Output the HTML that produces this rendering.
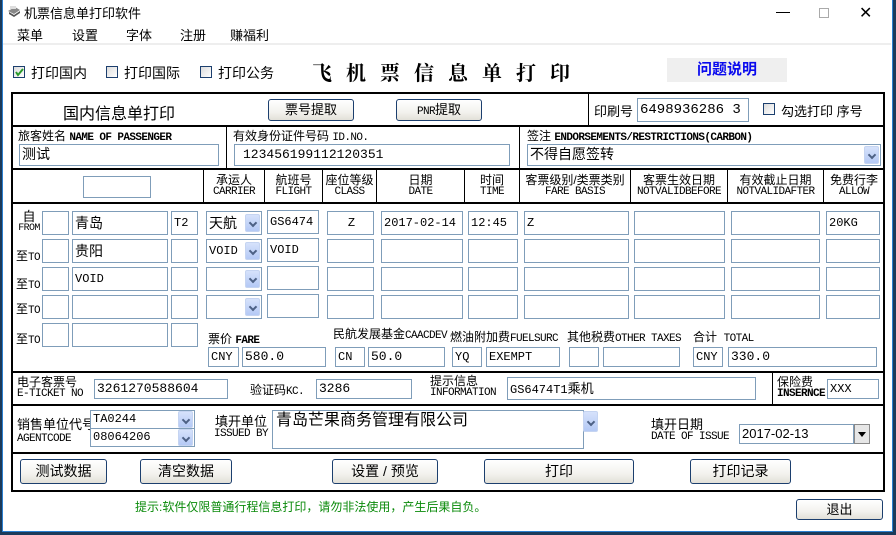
<!DOCTYPE html>
<html><head><meta charset="utf-8">
<style>
*{margin:0;padding:0;box-sizing:border-box}
body{width:896px;height:535px;overflow:hidden;background:#1b3a5a;font-family:"Liberation Sans","Noto Sans CJK SC",sans-serif;font-size:13px;color:#000;position:relative}
#win{position:absolute;left:2px;top:0;width:891px;height:532px;background:#fff;border:1px solid #2b7fd0;border-top:none}
.a{position:absolute;white-space:nowrap}
.in{position:absolute;border:1px solid #7f9db9;background:#fff;font-family:"Liberation Mono","Noto Sans CJK SC",monospace;font-size:12px;line-height:19px;padding-left:2px;white-space:nowrap;overflow:hidden}
.cj{font-family:"Liberation Sans","Noto Sans CJK SC",sans-serif;font-size:14px}
.arr{position:absolute;width:15px;background:linear-gradient(#d6e2fb,#b4c9f5);border:1px solid #c5d4f1;border-radius:2px}
.arr:after{content:"";position:absolute;left:4px;top:50%;margin-top:-3px;width:4px;height:4px;border-right:2px solid #4d6185;border-bottom:2px solid #4d6185;transform:rotate(45deg)}
.hl{position:absolute;height:2px;background:#000}
.vl{position:absolute;width:1px;background:#000}
.btn{position:absolute;border:1px solid #1c3f6e;border-radius:3px;background:linear-gradient(#fff,#f3f2ee 60%,#e2e0d8);text-align:center;font-size:14px}
.en{font-family:"Liberation Mono",monospace;font-size:11px;letter-spacing:-0.6px}
.b{font-weight:bold}
.lbl{position:absolute;text-align:center;line-height:12px;font-size:12px;white-space:nowrap}
.lbl .en{display:block}
.cb{position:absolute;width:12px;height:12px;border:1px solid #1c3f6e;background:linear-gradient(135deg,#dcdcdc,#fff)}
</style></head><body>
<div id="win"></div>
<!-- title bar -->
<div class="a" style="left:6px;top:4px;width:16px;height:14px">
<svg width="16" height="14"><path d="M2 7 L9 3 L14 6 L8 10 Z" fill="#888"/><path d="M3 8 L8 11 L14 7 L14 9 L8 13 L3 10Z" fill="#555"/><rect x="4" y="2" width="6" height="3" fill="#ddd"/></svg></div>
<div class="a" style="left:24px;top:3px;font-size:13px">机票信息单打印软件</div>
<div class="a" style="left:776px;top:12px;width:14px;height:1px;background:#000"></div>
<div class="a" style="left:819px;top:8px;width:10px;height:10px;border:1px solid #aaa"></div>
<div class="a" style="left:859px;top:3px;font-size:16px">✕</div>
<!-- menu -->
<div class="a" style="left:17px;top:25px">菜单</div>
<div class="a" style="left:72px;top:25px">设置</div>
<div class="a" style="left:126px;top:25px">字体</div>
<div class="a" style="left:180px;top:25px">注册</div>
<div class="a" style="left:230px;top:25px">赚福利</div>
<div class="a" style="left:3px;top:43px;width:888px;height:2px;background:#eee"></div>
<!-- checkboxes -->
<div class="cb" style="left:13px;top:66px"><svg width="10" height="10" style="position:absolute;left:0;top:0"><path d="M2 5 L4 8 L9 2" stroke="#2a9a2a" stroke-width="2" fill="none"/></svg></div>
<div class="a" style="left:31px;top:63px;font-size:14px">打印国内</div>
<div class="cb" style="left:106px;top:66px"></div>
<div class="a" style="left:124px;top:63px;font-size:14px">打印国际</div>
<div class="cb" style="left:200px;top:66px"></div>
<div class="a" style="left:218px;top:63px;font-size:14px">打印公务</div>
<div class="a" style="left:312px;top:57px;font-size:20px;font-weight:bold;letter-spacing:14px;font-family:'Noto Serif CJK SC',serif">飞机票信息单打印</div>
<div class="a" style="left:667px;top:58px;width:120px;height:24px;background:#efefef;color:#0a0aee;font-weight:bold;font-size:15px;text-align:center;line-height:24px">问题说明</div>
<!-- main frame -->
<div class="a" style="left:11px;top:92px;width:874px;height:400px;border:2px solid #000"></div>
<div class="hl" style="left:11px;top:125px;width:874px"></div>
<div class="hl" style="left:11px;top:168px;width:874px"></div>
<div class="hl" style="left:11px;top:202px;width:874px"></div>
<div class="hl" style="left:11px;top:371px;width:874px"></div>
<div class="hl" style="left:11px;top:404px;width:874px"></div>
<div class="hl" style="left:11px;top:452px;width:874px"></div>
<div class="vl" style="left:588px;top:93px;height:33px"></div>
<div class="vl" style="left:226px;top:126px;height:43px"></div>
<div class="vl" style="left:519px;top:126px;height:43px"></div>
<div class="vl" style="left:203px;top:169px;height:34px"></div>
<div class="vl" style="left:264px;top:169px;height:34px"></div>
<div class="vl" style="left:322px;top:169px;height:34px"></div>
<div class="vl" style="left:376px;top:169px;height:34px"></div>
<div class="vl" style="left:464px;top:169px;height:34px"></div>
<div class="vl" style="left:519px;top:169px;height:34px"></div>
<div class="vl" style="left:630px;top:169px;height:34px"></div>
<div class="vl" style="left:727px;top:169px;height:34px"></div>
<div class="vl" style="left:823px;top:169px;height:34px"></div>
<div class="vl" style="left:772px;top:372px;height:33px"></div>
<!-- row 1 -->
<div class="a" style="left:63px;top:100px;font-size:16px">国内信息单打印</div>
<div class="btn" style="left:268px;top:99px;width:86px;height:22px;line-height:20px;font-size:13px">票号提取</div>
<div class="btn" style="left:396px;top:99px;width:86px;height:22px;line-height:20px;font-size:13px"><span class="en">PNR</span>提取</div>
<div class="a" style="left:594px;top:101px">印刷号</div>
<div class="in" style="left:637px;top:98px;width:112px;height:24px;font-size:14px;line-height:22px">6498936286 3</div>
<div class="cb" style="left:763px;top:103px"></div>
<div class="a" style="left:781px;top:101px">勾选打印 序号</div>
<!-- row 2 -->
<div class="a" style="left:18px;top:127px;font-size:12px">旅客姓名 <span class="en b">NAME OF PASSENGER</span></div>
<div class="in cj" style="left:19px;top:144px;width:200px;height:22px">测试</div>
<div class="a" style="left:233px;top:127px;font-size:12px">有效身份证件号码 <span class="en">ID.NO.</span></div>
<div class="in" style="left:234px;top:144px;width:276px;height:22px;font-size:13px;padding-left:8px">123456199112120351</div>
<div class="a" style="left:527px;top:127px;font-size:12px">签注 <span class="en b">ENDORSEMENTS/RESTRICTIONS(CARBON)</span></div>
<div class="in cj" style="left:527px;top:144px;width:354px;height:22px">不得自愿签转</div>
<div class="arr" style="left:864px;top:146px;height:18px"></div>
<!-- header -->
<div class="in" style="left:83px;top:176px;width:68px;height:22px"></div>
<div class="lbl" style="left:204px;top:174px;width:60px">承运人<span class="en">CARRIER</span></div>
<div class="lbl" style="left:265px;top:174px;width:57px">航班号<span class="en">FLIGHT</span></div>
<div class="lbl" style="left:323px;top:174px;width:53px">座位等级<span class="en">CLASS</span></div>
<div class="lbl" style="left:377px;top:174px;width:87px">日期<span class="en">DATE</span></div>
<div class="lbl" style="left:465px;top:174px;width:54px">时间<span class="en">TIME</span></div>
<div class="lbl" style="left:520px;top:174px;width:110px">客票级别/类票类别<span class="en">FARE BASIS</span></div>
<div class="lbl" style="left:631px;top:174px;width:96px">客票生效日期<span class="en">NOTVALIDBEFORE</span></div>
<div class="lbl" style="left:728px;top:174px;width:95px">有效截止日期<span class="en">NOTVALIDAFTER</span></div>
<div class="lbl" style="left:824px;top:174px;width:60px">免费行李<span class="en">ALLOW</span></div>
<!-- segment rows -->
<div class="lbl" style="left:15px;top:211px;width:28px;font-size:13px">自<span class="en" style="font-size:10px">FROM</span></div>
<div class="a" style="left:16px;top:247px;font-size:12px">至<span class="en">TO</span></div>
<div class="a" style="left:16px;top:275px;font-size:12px">至<span class="en">TO</span></div>
<div class="a" style="left:16px;top:300px;font-size:12px">至<span class="en">TO</span></div>
<div class="a" style="left:16px;top:330px;font-size:12px">至<span class="en">TO</span></div>

<div class="in" style="left:42px;top:211px;width:27px;height:24px"></div>
<div class="in cj" style="left:72px;top:211px;width:96px;height:24px;line-height:22px">青岛</div>
<div class="in" style="left:171px;top:211px;width:27px;height:24px;line-height:22px">T2</div>
<div class="in cj" style="left:206px;top:211px;width:56px;height:24px;line-height:22px">天航</div><div class="arr" style="left:245px;top:214px;height:18px"></div>
<div class="in" style="left:267px;top:210px;width:52px;height:24px;line-height:22px">GS6474</div>
<div class="in" style="left:327px;top:211px;width:47px;height:24px;line-height:22px;text-align:center">Z</div>
<div class="in" style="left:381px;top:211px;width:82px;height:24px;line-height:22px">2017-02-14</div>
<div class="in" style="left:468px;top:211px;width:50px;height:24px;line-height:22px">12:45</div>
<div class="in" style="left:524px;top:211px;width:105px;height:24px;line-height:22px">Z</div>
<div class="in" style="left:634px;top:211px;width:91px;height:24px"></div>
<div class="in" style="left:731px;top:211px;width:89px;height:24px"></div>
<div class="in" style="left:826px;top:211px;width:54px;height:24px;line-height:22px">20KG</div>

<div class="in" style="left:42px;top:239px;width:27px;height:24px"></div>
<div class="in cj" style="left:72px;top:239px;width:96px;height:24px;line-height:22px">贵阳</div>
<div class="in" style="left:171px;top:239px;width:27px;height:24px"></div>
<div class="in" style="left:206px;top:239px;width:56px;height:24px;line-height:22px">VOID</div><div class="arr" style="left:245px;top:242px;height:18px"></div>
<div class="in" style="left:267px;top:238px;width:52px;height:24px;line-height:22px">VOID</div>
<div class="in" style="left:327px;top:239px;width:47px;height:24px"></div>
<div class="in" style="left:381px;top:239px;width:82px;height:24px"></div>
<div class="in" style="left:468px;top:239px;width:50px;height:24px"></div>
<div class="in" style="left:524px;top:239px;width:105px;height:24px"></div>
<div class="in" style="left:634px;top:239px;width:91px;height:24px"></div>
<div class="in" style="left:731px;top:239px;width:89px;height:24px"></div>
<div class="in" style="left:826px;top:239px;width:54px;height:24px"></div>

<div class="in" style="left:42px;top:267px;width:27px;height:24px"></div>
<div class="in" style="left:72px;top:267px;width:96px;height:24px;line-height:22px">VOID</div>
<div class="in" style="left:171px;top:267px;width:27px;height:24px"></div>
<div class="in" style="left:206px;top:267px;width:56px;height:24px"></div><div class="arr" style="left:245px;top:270px;height:18px"></div>
<div class="in" style="left:267px;top:266px;width:52px;height:24px"></div>
<div class="in" style="left:327px;top:267px;width:47px;height:24px"></div>
<div class="in" style="left:381px;top:267px;width:82px;height:24px"></div>
<div class="in" style="left:468px;top:267px;width:50px;height:24px"></div>
<div class="in" style="left:524px;top:267px;width:105px;height:24px"></div>
<div class="in" style="left:634px;top:267px;width:91px;height:24px"></div>
<div class="in" style="left:731px;top:267px;width:89px;height:24px"></div>
<div class="in" style="left:826px;top:267px;width:54px;height:24px"></div>

<div class="in" style="left:42px;top:295px;width:27px;height:24px"></div>
<div class="in" style="left:72px;top:295px;width:96px;height:24px"></div>
<div class="in" style="left:171px;top:295px;width:27px;height:24px"></div>
<div class="in" style="left:206px;top:295px;width:56px;height:24px"></div><div class="arr" style="left:245px;top:298px;height:18px"></div>
<div class="in" style="left:267px;top:294px;width:52px;height:24px"></div>
<div class="in" style="left:327px;top:295px;width:47px;height:24px"></div>
<div class="in" style="left:381px;top:295px;width:82px;height:24px"></div>
<div class="in" style="left:468px;top:295px;width:50px;height:24px"></div>
<div class="in" style="left:524px;top:295px;width:105px;height:24px"></div>
<div class="in" style="left:634px;top:295px;width:91px;height:24px"></div>
<div class="in" style="left:731px;top:295px;width:89px;height:24px"></div>
<div class="in" style="left:826px;top:295px;width:54px;height:24px"></div>

<div class="in" style="left:42px;top:323px;width:27px;height:24px"></div>
<div class="in" style="left:72px;top:323px;width:96px;height:24px"></div>
<div class="in" style="left:171px;top:323px;width:27px;height:24px"></div>
<!-- fares -->
<div class="a" style="left:208px;top:330px;font-size:12px">票价 <span class="en b">FARE</span></div>
<div class="a" style="left:333px;top:325px;font-size:12px">民航发展基金<span class="en">CAACDEV</span></div>
<div class="a" style="left:450px;top:328px;font-size:12px">燃油附加费<span class="en">FUELSURC</span></div>
<div class="a" style="left:567px;top:328px;font-size:12px">其他税费<span class="en">OTHER TAXES</span></div>
<div class="a" style="left:693px;top:328px;font-size:12px">合计 &nbsp;<span class="en">TOTAL</span></div>
<div class="in" style="left:208px;top:347px;width:31px;height:20px;line-height:18px">CNY</div>
<div class="in" style="left:242px;top:347px;width:84px;height:20px;line-height:18px;font-size:13px">580.0</div>
<div class="in" style="left:335px;top:347px;width:30px;height:20px;line-height:18px">CN</div>
<div class="in" style="left:368px;top:347px;width:77px;height:20px;line-height:18px;font-size:13px">50.0</div>
<div class="in" style="left:452px;top:347px;width:30px;height:20px;line-height:18px">YQ</div>
<div class="in" style="left:486px;top:347px;width:74px;height:20px;line-height:18px">EXEMPT</div>
<div class="in" style="left:569px;top:347px;width:30px;height:20px"></div>
<div class="in" style="left:603px;top:347px;width:77px;height:20px"></div>
<div class="in" style="left:693px;top:347px;width:30px;height:20px;line-height:18px">CNY</div>
<div class="in" style="left:728px;top:347px;width:149px;height:20px;line-height:18px;font-size:13px">330.0</div>
<!-- eticket row -->
<div class="lbl" style="left:17px;top:376px;text-align:left">电子客票号<span class="en">E-TICKET NO</span></div>
<div class="in" style="left:94px;top:379px;width:134px;height:20px;line-height:18px;font-size:13px">3261270588604</div>
<div class="a" style="left:250px;top:381px;font-size:12px">验证码<span class="en">KC.</span></div>
<div class="in" style="left:316px;top:379px;width:96px;height:20px;line-height:18px;font-size:13px">3286</div>
<div class="lbl" style="left:430px;top:375px;text-align:left">提示信息<span class="en">INFORMATION</span></div>
<div class="in" style="left:507px;top:377px;width:249px;height:23px;line-height:21px;font-size:12px">GS6474T1<span class="cj" style="font-size:13px">乘机</span></div>
<div class="lbl" style="left:777px;top:376px;text-align:left">保险费<span class="en b">INSERNCE</span></div>
<div class="in" style="left:827px;top:379px;width:52px;height:20px;line-height:18px">XXX</div>
<!-- agent row -->
<div class="lbl" style="left:17px;top:418px;text-align:left;font-size:13px;line-height:14px">销售单位代号<span class="en">AGENTCODE</span></div>
<div class="in" style="left:90px;top:410px;width:105px;height:19px;line-height:17px">TA0244</div><div class="arr" style="left:178px;top:411px;height:17px"></div>
<div class="in" style="left:90px;top:428px;width:105px;height:19px;line-height:17px">08064206</div><div class="arr" style="left:178px;top:429px;height:17px"></div>
<div class="lbl" style="left:211px;top:415px;width:60px;font-size:13px;line-height:13px">填开单位<span class="en">ISSUED BY</span></div>
<div class="in cj" style="left:272px;top:410px;width:312px;height:39px;font-size:16px;line-height:20px;padding-left:3px">青岛芒果商务管理有限公司</div>
<div class="arr" style="left:583px;top:411px;height:21px"></div>
<div class="lbl" style="left:651px;top:418px;text-align:left;font-size:13px;line-height:13px">填开日期<span class="en">DATE OF ISSUE</span></div>
<div class="in" style="left:739px;top:424px;width:115px;height:20px;line-height:18px;font-family:'Liberation Sans',sans-serif;font-size:13px">2017-02-13</div>
<div class="a" style="left:854px;top:424px;width:16px;height:20px;border:1px solid #888;background:#e6e6e6"><div style="position:absolute;left:3px;top:7px;border-left:4px solid transparent;border-right:4px solid transparent;border-top:5px solid #000"></div></div>
<!-- buttons -->
<div class="btn" style="left:20px;top:459px;width:87px;height:25px;line-height:23px">测试数据</div>
<div class="btn" style="left:140px;top:459px;width:92px;height:25px;line-height:23px">清空数据</div>
<div class="btn" style="left:332px;top:459px;width:106px;height:25px;line-height:23px">设置 / 预览</div>
<div class="btn" style="left:484px;top:459px;width:150px;height:25px;line-height:23px">打印</div>
<div class="btn" style="left:690px;top:459px;width:101px;height:25px;line-height:23px">打印记录</div>
<div class="a" style="left:135px;top:498px;color:#0a8a0a;font-size:12px">提示:软件仅限普通行程信息打印，请勿非法使用，产生后果自负。</div>
<div class="btn" style="left:796px;top:499px;width:87px;height:21px;line-height:19px;font-size:13px">退出</div>
</body></html>
